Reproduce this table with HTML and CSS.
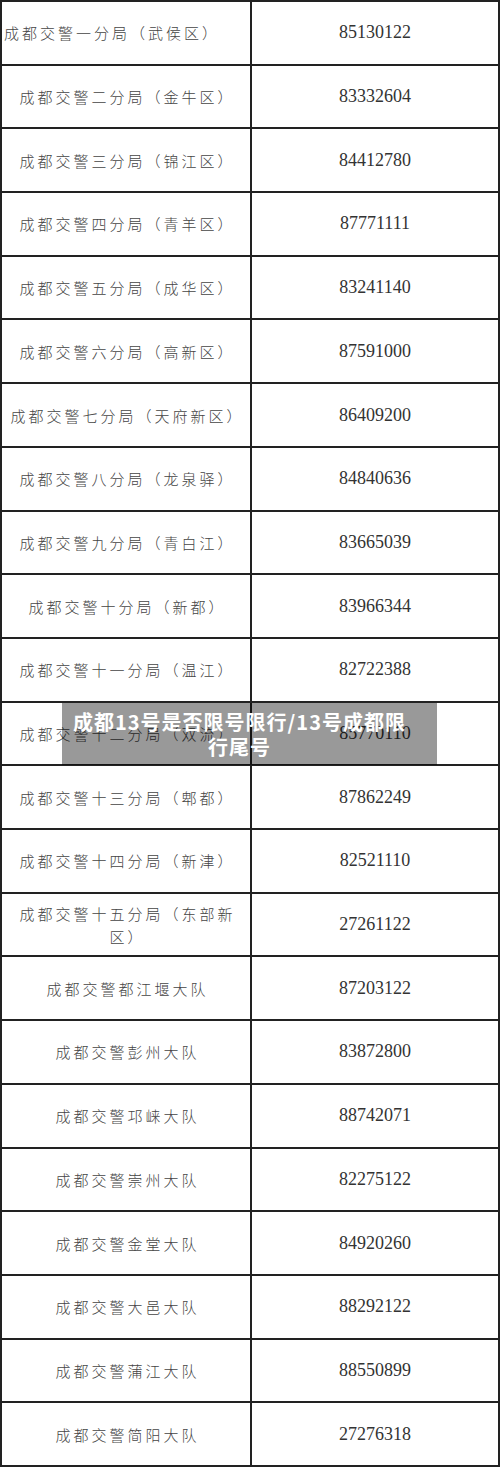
FILE: index.html
```html
<!DOCTYPE html>
<html lang="zh-CN">
<head>
<meta charset="utf-8">
<title>成都13号是否限号限行/13号成都限行尾号</title>
<link rel="stylesheet" href="styles.css">
</head>
<body>
<div class="page">
  <div class="table">
    <div class="cell name first">成都交警一分局（武侯区）</div><div class="cell tel">85130122</div>
    <div class="cell name">成都交警二分局（金牛区）</div><div class="cell tel">83332604</div>
    <div class="cell name">成都交警三分局（锦江区）</div><div class="cell tel">84412780</div>
    <div class="cell name">成都交警四分局（青羊区）</div><div class="cell tel">87771111</div>
    <div class="cell name">成都交警五分局（成华区）</div><div class="cell tel">83241140</div>
    <div class="cell name">成都交警六分局（高新区）</div><div class="cell tel">87591000</div>
    <div class="cell name">成都交警七分局（天府新区）</div><div class="cell tel">86409200</div>
    <div class="cell name">成都交警八分局（龙泉驿）</div><div class="cell tel">84840636</div>
    <div class="cell name">成都交警九分局（青白江）</div><div class="cell tel">83665039</div>
    <div class="cell name">成都交警十分局（新都）</div><div class="cell tel">83966344</div>
    <div class="cell name">成都交警十一分局（温江）</div><div class="cell tel">82722388</div>
    <div class="cell name">成都交警十二分局（双流）</div><div class="cell tel">85770110</div>
    <div class="cell name">成都交警十三分局（郫都）</div><div class="cell tel">87862249</div>
    <div class="cell name">成都交警十四分局（新津）</div><div class="cell tel">82521110</div>
    <div class="cell name wrap">成都交警十五分局（东部新<br>区）</div><div class="cell tel">27261122</div>
    <div class="cell name">成都交警都江堰大队</div><div class="cell tel">87203122</div>
    <div class="cell name">成都交警彭州大队</div><div class="cell tel">83872800</div>
    <div class="cell name">成都交警邛崃大队</div><div class="cell tel">88742071</div>
    <div class="cell name">成都交警崇州大队</div><div class="cell tel">82275122</div>
    <div class="cell name">成都交警金堂大队</div><div class="cell tel">84920260</div>
    <div class="cell name">成都交警大邑大队</div><div class="cell tel">88292122</div>
    <div class="cell name">成都交警蒲江大队</div><div class="cell tel">88550899</div>
    <div class="cell name">成都交警简阳大队</div><div class="cell tel">27276318</div>
  </div>
  <div class="title-overlay">
    <div class="title-text">成都13号是否限号限行/13号成都限<br>行尾号</div>
  </div>
</div>
</body>
</html>
```

FILE: styles.css
```css
html, body {
  margin: 0;
  padding: 0;
  background: #ffffff;
}

.page {
  position: relative;
  width: 500px;
  height: 1469px;
  overflow: hidden;
}

.table {
  box-sizing: border-box;
  width: 500px;
  height: 1467px;
  display: grid;
  grid-template-columns: 250px 248px;
  grid-template-rows: repeat(23, 1fr);
  border-top: 2px solid #222;
  border-left: 2px solid #222;
}

.cell {
  box-sizing: border-box;
  border-right: 2px solid #222;
  border-bottom: 2px solid #222;
  display: flex;
  align-items: center;
  justify-content: center;
  white-space: nowrap;
}

.name {
  font-family: "Noto Sans CJK SC", "Noto Sans", sans-serif;
  font-weight: 300;
  font-size: 15px;
  letter-spacing: 3px;
  padding-left: 3px;
  color: #454545;
  line-height: 23px;
  text-align: center;
  width: 250px;
}

.name.first {
  justify-content: flex-start;
  padding-left: 2px;
}

.tel {
  font-family: "Liberation Serif", "Times New Roman", serif;
  font-size: 18px;
  color: #333;
}

.title-overlay {
  position: absolute;
  left: 62px;
  top: 703px;
  width: 375px;
  height: 62px;
  background: rgba(0, 0, 0, 0.4);
  display: flex;
  align-items: center;
  justify-content: center;
  box-sizing: border-box;
  padding: 0 30px 0 10px;
}

.title-text {
  font-family: "Noto Sans CJK SC", "Noto Sans", sans-serif;
  font-weight: 700;
  font-size: 20px;
  line-height: 25px;
  letter-spacing: 1px;
  color: #ffffff;
  text-align: center;
  white-space: nowrap;
}
```
